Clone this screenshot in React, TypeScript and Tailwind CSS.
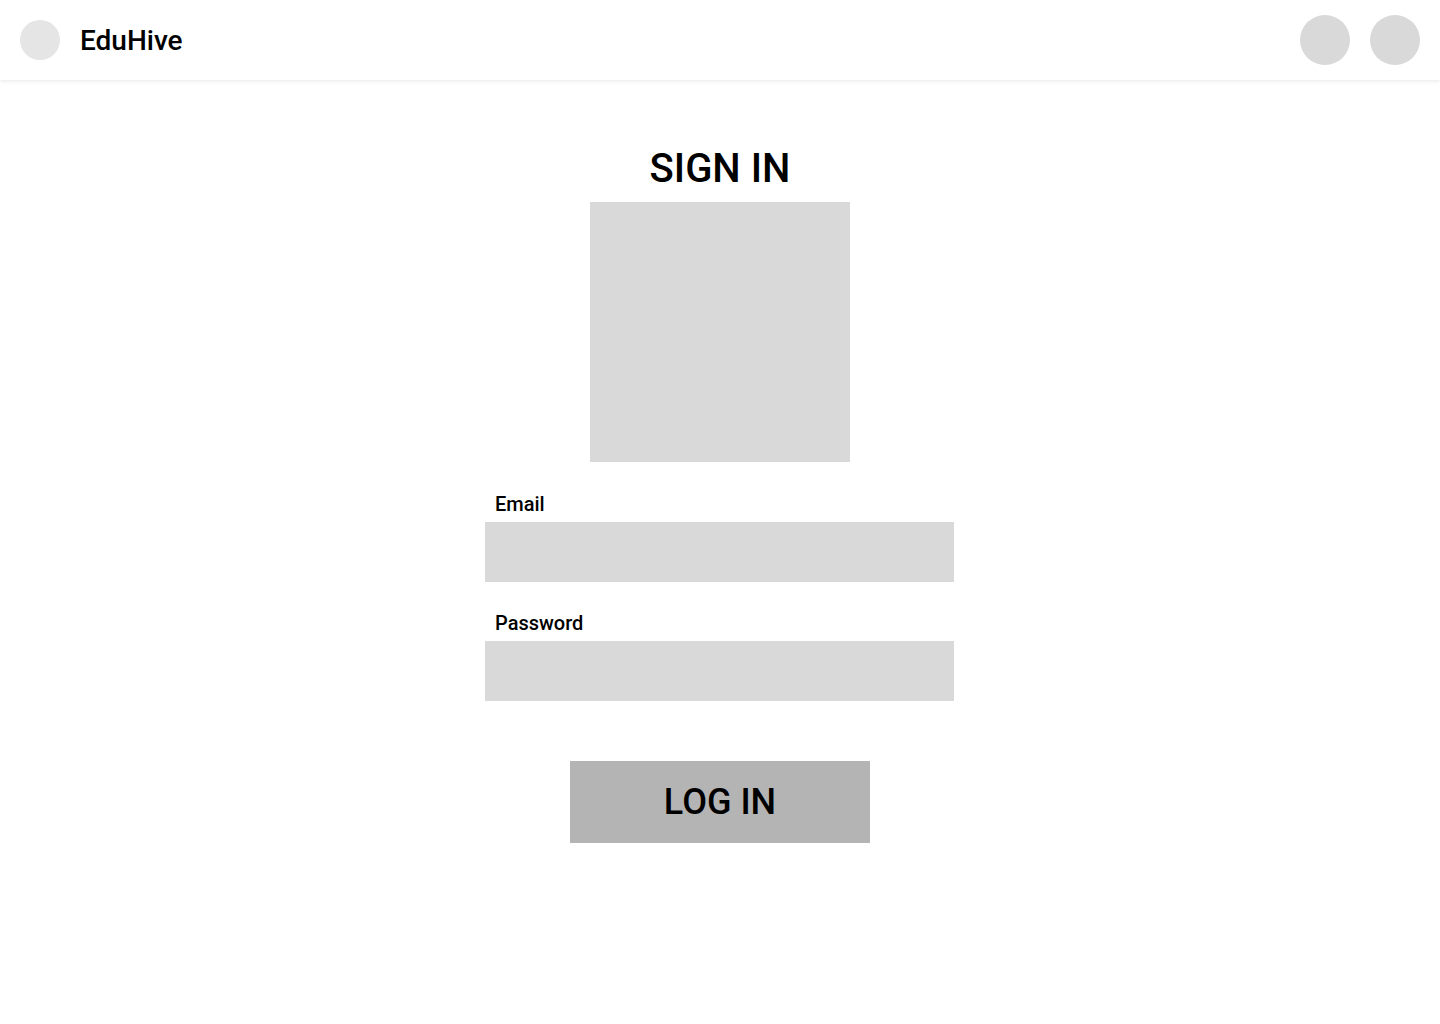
import React from "react";

function Field({ id, label, type }: { id: string; label: string; type: string }) {
  return (
    <div className="flex w-full flex-col gap-1.5">
      <label htmlFor={id} className="pl-2.5 text-xl leading-6 font-medium">
        {label}
      </label>
      <input id={id} type={type} className="h-15 w-full bg-[#d9d9d9] px-2.5 text-xl" />
    </div>
  );
}

export default function App() {
  return (
    <div className="min-h-screen bg-white font-['Roboto',sans-serif] text-black">
      <header className="flex h-20 items-center justify-between px-5 shadow-[0_1px_4px_rgba(0,0,0,0.1)]">
        <a href="#" className="flex items-center gap-5">
          <span className="size-10 rounded-full bg-[#e5e5e5]" />
          <span className="text-[28px] leading-[33px] font-medium">EduHive</span>
        </a>
        <nav className="flex gap-5">
          <button type="button" aria-label="Notifications" className="size-[50px] rounded-full bg-[#d9d9d9]" />
          <button type="button" aria-label="Profile" className="size-[50px] rounded-full bg-[#d9d9d9]" />
        </nav>
      </header>
      <main className="flex flex-col items-center px-5 pt-[65px] pb-10">
        <h1 className="text-[40px] leading-[47px] font-medium">SIGN IN</h1>
        <div className="mt-2.5 size-[260px] bg-[#d9d9d9]" />
        <form className="mt-[30px] flex w-full max-w-[470px] flex-col items-center">
          <div className="flex w-full max-w-[469px] flex-col gap-[29px] self-start">
            <Field id="email" label="Email" type="email" />
            <Field id="password" label="Password" type="password" />
          </div>
          <button
            type="button"
            className="mt-15 w-full max-w-[300px] bg-[#b4b4b4] py-5 text-4xl leading-[42px] font-medium"
          >
            LOG IN
          </button>
        </form>
      </main>
    </div>
  );
}
